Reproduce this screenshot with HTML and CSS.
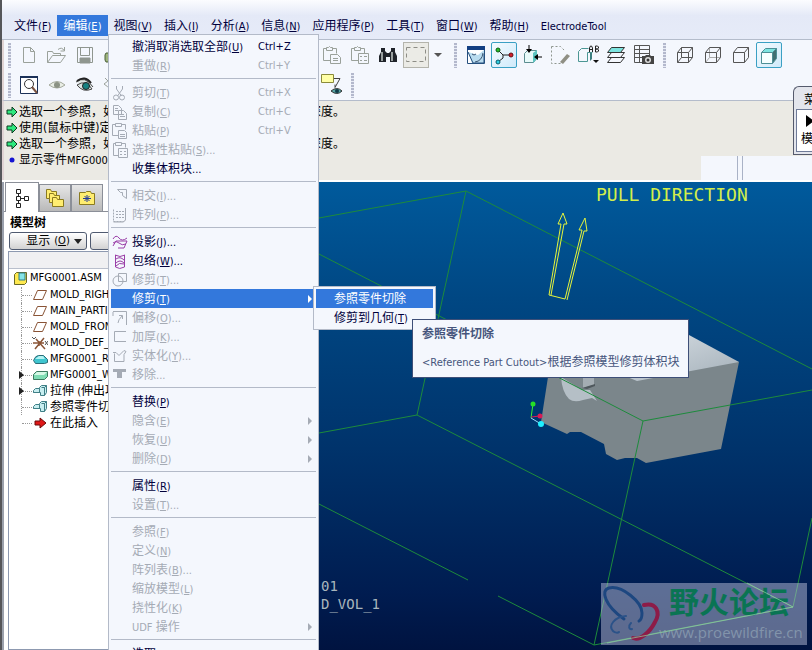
FILE: index.html
```
<!DOCTYPE html>
<html lang="zh-CN">
  <head>
    <meta charset="UTF-8" />
    <meta name="viewport" content="width=device-width, initial-scale=1.0" />
    <title>MFG0001.ASM</title>
    <link rel="stylesheet" href="styles.css">
  </head>
  <body>
    <div class="app">
      <nav class="menubar">
        <button>文件<span class="en">(<u>F</u>)</span></button>
        <button class="open">编辑<span class="en">(<u>E</u>)</span></button>
        <button>视图<span class="en">(<u>V</u>)</span></button>
        <button>插入<span class="en">(<u>I</u>)</span></button>
        <button>分析<span class="en">(<u>A</u>)</span></button>
        <button>信息<span class="en">(<u>N</u>)</span></button>
        <button>应用程序<span class="en">(<u>P</u>)</span></button>
        <button>工具<span class="en">(<u>T</u>)</span></button>
        <button>窗口<span class="en">(<u>W</u>)</span></button>
        <button>帮助<span class="en">(<u>H</u>)</span></button>
        <button><span class="en">ElectrodeTool</span></button>
      </nav>

      <div class="toolbars">
        <div class="toolbar">
          <div class="tool-group first">
            <span class="grip"></span>
            <button class="tool" aria-label="新建"><svg width="20" height="20" fill="none" stroke="#9aa19a"><path d="M4.500 2.500h7l4 4v11h-11zM11.500 2.500v4h4"/></svg></button>
            <button class="tool" aria-label="打开"><svg width="20" height="20" fill="none" stroke="#9aa19a"><path d="M.5 17.500v-11h5l1 2h7v2M.5 17.500l5-7h13l-5 7zM11 4.500q4-3 6 1M17.500 2v4h-4"/></svg></button>
            <button class="tool" aria-label="保存"><svg width="20" height="20" fill="none" stroke="#8f968f"><path d="M2.500 2.500h15v15h-15zM5.500 2.500v8h9v-8"/><path d="M5 13h10v5H5z" fill="#8f968f"/></svg></button>
            <button class="tool" aria-label="打印"><svg width="20" height="20"><path d="M3 8h12v9H3l-1-2v-5z" fill="#9db37c" stroke="#4a6038"/></svg></button>
          </div>
          <div class="tool-group">
            <button class="tool" aria-label="粘贴"><svg width="20" height="20" fill="none" stroke="#9aa19a"><path d="M8.500 15.500h-7v-12h3M10.500 3.500h4v5M4.500 2.500h2l1-1 1 1h2v3h-6zM8.500 9.500h7l3 3v6h-10zM11 13.500h5M11 15.500h5"/></svg></button>
            <button class="tool" aria-label="选择性粘贴"><svg width="20" height="20" fill="none" stroke="#9aa19a"><path d="M8.500 15.500h-7v-12h3M10.500 3.500h4v5M4.500 2.500h2l1-1 1 1h2v3h-6zM8.500 8.500h10v10h-10zM10 11.500h2M14 11.500h3M10 15.500h2M14 15.500h3"/></svg></button>
            <button class="tool" aria-label="查找"><svg width="20" height="20"><path d="M3 3h4v3l2 2h2l2-2V3h4v4l2 4v6h-7v-5H8v5H1v-6l2-4z" fill="#20242a"/><path d="M4 7v9M14 7v9" stroke="#9aa1a0" stroke-width="2"/></svg></button>
            <button class="tool pressed" aria-label="选取框"><svg width="20" height="20" fill="none" stroke="#8d8d86"><path d="M.5 2.500h19v14h-19z" stroke-dasharray="4 3"/></svg></button>
            <button class="drop" aria-label="选取选项"><svg width="8" height="4"><path d="M0 0h8L4 4z" fill="#555"/></svg></button>
            <span class="grip"></span>
            <button class="tool" aria-label="重画"><svg width="20" height="20"><path d="M1.500 1.500h17v17h-17z" fill="#fff" stroke="#26507e"/><path d="M1 1h18v4H1z" fill="#123f82"/><path d="M2 7l10 3 6-5v13H6z" fill="#b9dcef"/><path d="M2 7l5 11h11V9" fill="none" stroke="#26507e"/><path d="M6 9l2 1 2-1M9 17q7-1 8-9" stroke="#3b5573" fill="none"/></svg></button>
            <button class="tool on" aria-label="旋转中心"><svg width="20" height="20"><path d="M4 5l5 5h8M9 10v3l-5 4" stroke="#222" fill="none"/><circle cx="4" cy="5" r="2" fill="#27c227" stroke="#0a5a14"/><circle cx="17" cy="10" r="2" fill="#d21e2c" stroke="#640a10"/><circle cx="4" cy="17" r="2" fill="#2bd0e2" stroke="#0a5a6a"/></svg></button>
            <button class="tool" aria-label="定向模式"><svg width="20" height="20"><path d="M2.500 8.500l3-3h9v8l-3 4h-9z" fill="#e8fafa" stroke="#5b8d90"/><path d="M11 8l4-3v9l-4 4z" fill="#5cc4c0"/><path d="M7 0v6M20 12h-6" stroke="#000"/><path d="M4 4h6L7 8zM16 9v6l-4-3z" fill="#000"/></svg></button>
            <button class="tool" aria-label="外观"><svg width="20" height="20" fill="none"><path d="M1.500 1.500h9l4 4M1.500 1.500v17h9" stroke="#8f968f" stroke-dasharray="2 2"/><path d="M10 17l7-8 3 2-7 8z" fill="#8f8f84"/></svg></button>
            <button class="tool" aria-label="视图列表"><svg width="21" height="20"><path d="M.5 6.500l3-3h7M.5 6.500v10h9v-9h5" stroke="#4c9794" fill="none"/><path d="M12 8h2v6l-2 2z" fill="#3c7f80"/><path d="M15 15h6l-3 3z" fill="#111"/><path d="M11.500 7V3l1-2h1l1 2v4M11.500 4.500h3M17.500 1v6h2l1-1V5l-1-1h-2 2l1-1V2l-1-1z" stroke="#222" fill="none"/></svg></button>
            <button class="tool" aria-label="层"><svg width="20" height="20" stroke="#333"><path d="M1.500 17.500l4-5h13l-4 5z" fill="#f4f7fd"/><path d="M1.500 12.500l4-5h13l-4 5z" fill="#f4f7fd"/><path d="M1.500 7.500l4-5h13l-4 5z" fill="#7ce4e0"/></svg></button>
            <button class="tool" aria-label="视图管理器"><svg width="20" height="20"><path d="M.5.5h15v17H.5zM.5 4.500h15M.5 8.500h15M.5 12.500h8M5.500.5v17" fill="none" stroke="#555"/><path d="M8 11h3l1-1h4l1 1h3v8H8z" fill="#444"/><circle cx="14" cy="15" r="3" fill="#ddd"/><circle cx="14" cy="15" r="1.500" fill="#333"/></svg></button>
            <span class="grip"></span>
            <button class="tool" aria-label="线框"><svg width="20" height="20" fill="none" stroke="#555"><path d="M2.500 7.500h11v10h-11zM6.500 2.500h11v10h-11zM2.500 7.500l4-5M13.500 7.500l4-5M2.500 17.500l4-5M13.500 17.500l4-5"/></svg></button>
            <button class="tool" aria-label="隐藏线"><svg width="20" height="20" fill="none" stroke="#555"><path d="M6.500 2.500v10h11M2.500 17.500l4-5" stroke="#aaa"/><path d="M2.500 7.500h11v10h-11zM2.500 7.500l4-5h11v10l-4 5M13.500 7.500l4-5"/></svg></button>
            <button class="tool" aria-label="无隐藏线"><svg width="20" height="20" fill="none" stroke="#555"><path d="M2.500 7.500h11v10h-11zM2.500 7.500l4-5h11v10l-4 5M13.500 7.500l4-5"/></svg></button>
            <button class="tool on" aria-label="着色"><svg width="20" height="20" stroke="#4d8f96"><path d="M2.500 7.500l4-4h11l-4 4z" fill="#7ce4e0"/><path d="M13.500 7.500l4-4v10l-4 5z" fill="#3f7073"/><path d="M2.500 7.500h11v11h-11z" fill="#f6ffff"/></svg></button>
          </div>
        </div>
        <div class="toolbar">
          <div class="tool-group first">
            <span class="grip"></span>
            <button class="tool" aria-label="重新调整"><svg width="20" height="20" fill="none"><path d="M1.500 1.500h17v17h-17z" fill="#fff" stroke="#1b3158"/><path d="M1 2h18" stroke="#1b3158" stroke-width="2"/><circle cx="10" cy="9" r="4.500" stroke="#333"/><path d="M13 12l5 6" stroke="#7a5340" stroke-width="2"/></svg></button>
            <button class="tool" aria-label="显示"><svg width="20" height="20"><path d="M2 10q8-7 16 0-8 6-16 0z" fill="#e9eee6" stroke="#a4a99c"/><circle cx="10" cy="10" r="3" fill="#8b9284"/></svg></button>
            <button class="tool" aria-label="隐藏"><svg width="20" height="20"><path d="M1 7q9-7 17 5M2 10q9-6 15 4-9 4-15-4z" fill="#dfe6e4" stroke="#444"/><circle cx="11" cy="11" r="3.500" fill="#168080" stroke="#222"/><path d="M2 6q8-6 14 2" stroke="#222" stroke-width="2" fill="none"/></svg></button>
            <button class="tool" aria-label="取消隐藏"><svg width="20" height="20" fill="none" stroke="#9aa19a"><path d="M1 9q7-7 14 0-7 7-14 0zM2 3l14 14"/></svg></button>
          </div>
          <div class="tool-group">
            <button class="tool" aria-label="注释显示"><svg width="22" height="24"><path d="M.5 1.500h12v8H.5z" fill="#ffffa6" stroke="#8a8a3a"/><path d="M13 5.500h6l-5 9v-3" stroke="#444" fill="none"/><path d="M10 18q6-5 11 0-5 5-11 0z" fill="#56a3a3" stroke="#333"/><circle cx="16" cy="18" r="2" fill="#103c48"/></svg></button>
            <span class="grip"></span>
          </div>
        </div>
      </div>

      <div class="messages">
        <ul>
          <li><svg width="12" height="12"><path d="M1 4h5V1l5 5-5 5V8H1z" fill="#2ee87e" stroke="#0d3a20"/></svg><span class="msg">选取一个参照，如</span><span>深度。</span></li>
          <li><svg width="12" height="12"><path d="M1 4h5V1l5 5-5 5V8H1z" fill="#2ee87e" stroke="#0d3a20"/></svg><span class="msg">使用(鼠标中键)定</span></li>
          <li><svg width="12" height="12"><path d="M1 4h5V1l5 5-5 5V8H1z" fill="#2ee87e" stroke="#0d3a20"/></svg><span class="msg">选取一个参照，如</span><span>深度。</span></li>
          <li><svg width="12" height="12"><circle cx="6" cy="6" r="2.500" fill="#1414d2"/></svg><span class="msg">显示零件<span class="en">MFG0001</span></span></li>
        </ul>
        <div class="status"><span></span></div>
      </div>

      <div class="main">
        <aside class="navigator">
          <div class="tabs">
            <button class="tab active" aria-label="模型树"><svg width="16" height="20" fill="none" stroke="#222"><path d="M2.500 1.500h4v4h-4zM2.500 8.500h4v4h-4zM10.500 8.500h4v4h-4zM2.500 15.500h4v4h-4zM6.500 10.500h4M4.500 5.500v3M4.500 12.500v3"/></svg></button>
            <button class="tab" aria-label="文件夹浏览器"><svg width="20" height="20" fill="#ffed70" stroke="#8a7a20"><path d="M1.500 10.500v-9h4l1 2h5v7z"/><path d="M4.500 14.500v-9h4l1 2h5v7z"/><path d="M7.500 18.500v-9h4l1 2h6v7z"/></svg></button>
            <button class="tab" aria-label="收藏夹"><svg width="18" height="16"><path d="M1.500 14.500v-12h6l1-1h4l1 2h3v11z" fill="#ffed70" stroke="#8a7a20"/><path d="M9 5v7M5 8.500h8M6.500 6l5 5M11.500 6l-5 5" stroke="#223a9a"/></svg></button>
          </div>
          <h2>模型树</h2>
          <div class="tree-buttons">
            <button>显示<span class="en">(<u>O</u>)</span><svg width="8" height="5"><path d="M0 0h8L4 5z" fill="#222"/></svg></button>
            <button aria-label="设置"></button>
          </div>
          <div class="tree">
            <div class="tree-head"></div>
            <div class="root"><svg width="15" height="15"><path d="M1.500 3.500l2-2h10v10l-2 2h-10z" fill="#ffe94f" stroke="#6a6a28"/><path d="M6 2h6v7H6z" fill="#86e4e6" stroke="#2f7f88"/></svg><span class="en">MFG0001.ASM</span></div>
            <ul>
              <li><svg width="16" height="14"><path d="M5.500 2.500h9l-4 9h-9z" fill="none" stroke="#8a5436"/></svg><span class="en">MOLD_RIGHT</span></li>
              <li><svg width="16" height="14"><path d="M5.500 2.500h9l-4 9h-9z" fill="none" stroke="#8a5436"/></svg><span class="en">MAIN_PARTING</span></li>
              <li><svg width="16" height="14"><path d="M5.500 2.500h9l-4 9h-9z" fill="none" stroke="#8a5436"/></svg><span class="en">MOLD_FRONT</span></li>
              <li><svg width="16" height="14" fill="none"><path d="M1 7h11M3 13l9-11M4 3l9 10M7 5v5" stroke="#8a5436" stroke-width="1.500"/><path d="M13 5l3 4M16 5l-3 4M0 1l2 2 2-2" stroke="#555"/></svg><span class="en">MOLD_DEF_CSYS</span></li>
              <li><svg width="16" height="14"><path d="M1.500 8.500q2-5 5-5h5l4 4v3l-3 1h-9z" fill="#3fc5cf" stroke="#2c6d78"/><path d="M3 7l4-3h4l2 3z" fill="#b4f2f2"/></svg><span class="en">MFG0001_REF</span></li>
              <li class="branch"><svg width="16" height="14"><path d="M1.500 6.500l3-3h11v5l-3 3h-11z" fill="#7fdcb4" stroke="#3c7a60"/><path d="M2 7l3-3h10l-3 3z" fill="#d6f8e6"/></svg><span class="en">MFG0001_WRK</span></li>
              <li class="branch"><svg width="16" height="14" fill="#c8eef0" stroke="#3f7f86"><path d="M1.500 6.500l2-2h4v-1l2-2h5v7l-2 3h-4v-3h-7z"/><path d="M7.500 4.500v4h-6M9.500 3.500h3v8M12.500 3.500l2-2" fill="none"/></svg><span>拉伸<span class="en"> (</span>伸出项</span></li>
              <li><svg width="16" height="14" fill="#c8eef0" stroke="#3f7f86"><path d="M1.500 6.500l2-2h4v-1l2-2h5v7l-2 3h-4v-3h-7z"/><path d="M7.500 4.500v4h-6M9.500 3.500h3v8M12.500 3.500l2-2" fill="none"/></svg><span>参照零件切除</span></li>
              <li><svg width="16" height="14"><path d="M3 5h5V2l6 5-6 5V9H3z" fill="#e01818" stroke="#6a0a0a"/></svg><span>在此插入</span></li>
            </ul>
          </div>
        </aside>

        <div class="viewport">
          <svg class="scene" viewBox="319 182 493 468" preserveAspectRatio="xMinYMin meet">
            <defs>
              <linearGradient id="top" x1="0" y1="0" x2="1" y2="1">
                <stop offset="0" stop-color="#d9e0e6"/>
                <stop offset="1" stop-color="#a3afb8"/>
              </linearGradient>
            </defs>
            <!-- workpiece -->
            <path d="M548 377V350H689L739 362 721 449 646 463 637 458H625L617 460 606 454 604 444 581 432H570L567 434 541 422z" fill="#7b868b"/>
            <path d="M620 335H689L739 362 637 381 620 374z" fill="url(#top)"/>
            <path d="M561 377q1 15 8 22 5 4 14 1l9-2 5 3-7-11-8 0-8-5z" fill="#b5bfc6"/>
            <path d="M583 377h11v8l-11 3z" fill="#a4adb3"/>
            <path d="M582 388l13-4v2l-8 3z" fill="#4f585d"/>
            <g class="wire">
              <path d="M319 218L466 191 812 369M466 191L417 415 319 433M417 415L793 607 594 645M793 607L812 518"/>
              <path d="M319 254L643 421 812 390M643 421L594 645M319 504L468 580M498 596L594 645"/>
            </g>
            <!-- pull direction arrows -->
            <path class="pull" d="M563 213l-5 11h3l-12 71 16 4 17-69h-3l6-12 2 13h-3l-17 69M563 213l4 11h-3l-13 71"/>
            <text class="pull-label" x="596" y="201">PULL DIRECTION</text>
            <text class="part-label" x="321" y="591">01</text>
            <text class="part-label" x="321" y="609">D_VOL_1</text>
            <!-- csys -->
            <g fill="none">
              <path d="M533 404L531 418" stroke="#35f035"/>
              <path d="M531 417L540 416" stroke="#d81b55"/>
              <path d="M531 418L541 424" stroke="#9df"/>
            </g>
            <circle cx="533" cy="404" r="2.500" fill="#26e026"/>
            <circle cx="540" cy="416" r="2.500" fill="#d81b55"/>
            <circle cx="541" cy="424" r="3" fill="#1ef0ff"/>
            <!-- forum logo -->
            <path d="M601 583h206v62H601z" fill="#b9c0da" fill-opacity=".5"/>
            <g fill="none" stroke-linecap="round">
              <path d="M624 619C605 606 600 590 609 588 622 585 642 602 642 613 642 617 641 620 639 621" stroke="#1d4780" stroke-width="3"/>
              <path d="M626 616C614 617 608 626 613 631 615 633 618 633 619 632" stroke="#2b5288" stroke-width="2"/>
              <path d="M631 623C628 626 629 630 632 629" stroke="#2b5288" stroke-width="2"/>
              <path d="M644 605C656 602 661 612 655 622 650 632 640 641 633 638" stroke="#8d1c48" stroke-width="4"/>
            </g>
            <text class="logo-name" x="669" y="613">野火论坛</text>
            <text class="logo-url" x="659" y="638">www.proewildfire.cn</text>
            <path d="M747 583L793 607 607 643" fill="none" stroke="#8fd0a0" stroke-opacity=".7"/>
          </svg>
        </div>
      </div>

      <div class="manager">
        <div class="manager-title">菜单管理器</div>
        <div class="manager-body"><svg width="8" height="12"><path d="M0 0l8 6-8 6z"/></svg><div>模具</div></div>
      </div>

      <ul class="menu edit-menu">
        <li><button><i></i><span>撤消取消选取全部<span class="en">(<u>U</u>)</span></span><kbd>Ctrl+Z</kbd></button></li>
        <li><button disabled><i></i><span>重做<span class="en">(<u>R</u>)</span></span><kbd>Ctrl+Y</kbd></button></li>
        <li class="sep"></li>
        <li><button disabled><i><svg width="16" height="16"><path d="M4.500 1v3l5 7M10.500 1v3l-5 7"/><circle cx="4" cy="12.500" r="2.500"/><circle cx="10" cy="12.500" r="2.500"/></svg></i><span>剪切<span class="en">(<u>T</u>)</span></span><kbd>Ctrl+X</kbd></button></li>
        <li><button disabled><i><svg width="16" height="16"><path d="M1.500 1.500h5l3 3v6h-8zM6.500 6.500h5l3 3v6h-8zM3 4.500h3M3 6.500h3M8 10.500h4M8 12.500h5"/></svg></i><span>复制<span class="en">(<u>C</u>)</span></span><kbd>Ctrl+C</kbd></button></li>
        <li><button disabled><i><svg width="16" height="16"><path d="M6.500 12.500h-6v-11h3M9.500 1.500h4v5M3.500.5h6v3h-6zM6.500 7.500h6l2 2v6h-8zM8 11.500h5M8 13.500h5"/></svg></i><span>粘贴<span class="en">(<u>P</u>)</span></span><kbd>Ctrl+V</kbd></button></li>
        <li><button disabled><i><svg width="16" height="16"><path d="M6.500 13.500h-5v-12h2M9.500 1.500h4v4M3.500.5h6v3h-6zM6.500 6.500h9v9h-9zM8 9.500h2M12 9.500h2M8 12.500h2M12 12.500h2"/></svg></i><span>选择性粘贴<span class="en">(<u>S</u>)...</span></span></button></li>
        <li><button><i></i><span>收集体积块<span class="en">...</span></span></button></li>
        <li class="sep"></li>
        <li><button disabled><i><svg width="16" height="16"><path d="M5.500 1.500h9v9l-4-3v-3h-2z"/></svg></i><span>相交<span class="en">(<u>I</u>)...</span></span></button></li>
        <li><button disabled><i><svg width="16" height="16"><path d="M1.500 2.500v12h10l2-2v-11M4 4.500h8M4 7.500h8M4 10.500h8" stroke-dasharray="2 1"/><path d="M13.500 1v12l-2 2h-10"/></svg></i><span>阵列<span class="en">(<u>P</u>)...</span></span></button></li>
        <li class="sep"></li>
        <li><button><i><svg class="purple" width="16" height="16"><path d="M1 5q3-5 6-1t8 0M1 12l3-5h11l-3 7H6M1 9q3-3 6 0t7 1"/></svg></i><span>投影<span class="en">(<u>J</u>)...</span></span></button></li>
        <li><button><i><svg class="purple" width="16" height="16"><path d="M3.500 2v12q4 3 9 0V2M3 2q5 3 10 0M4 6q4-3 8 1M4 10q4-4 8 0M4 13q3-4 8-2"/></svg></i><span>包络<span class="en">(<u>W</u>)...</span></span></button></li>
        <li><button disabled><i><svg width="16" height="16"><circle cx="6" cy="9" r="5"/><path d="M6.500 1.500h8v8h-8z"/></svg></i><span>修剪<span class="en">(<u>T</u>)...</span></span></button></li>
        <li class="has-sub">
          <button class="hot"><i></i><span>修剪<span class="en">(<u>T</u>)</span></span><b></b></button>
          <ul class="menu submenu">
            <li><button class="hot"><i></i><span>参照零件切除</span></button></li>
            <li><button><i></i><span>修剪到几何<span class="en">(<u>T</u>)</span></span></button></li>
          </ul>
          <div class="tooltip" role="tooltip">
            <strong>参照零件切除</strong>
            <p><span class="en">&lt;Reference Part Cutout&gt;</span>根据参照模型修剪体积块</p>
          </div>
        </li>
        <li><button disabled><i><svg width="16" height="16"><path d="M1 1.500h13.500V15M1 2v4M6 13q0-3 4-7M7 5.500h3.500V9"/></svg></i><span>偏移<span class="en">(<u>O</u>)...</span></span></button></li>
        <li><button disabled><i><svg width="16" height="16"><path d="M14 2.500H2.500v10H14"/></svg></i><span>加厚<span class="en">(<u>K</u>)...</span></span></button></li>
        <li><button disabled><i><svg width="16" height="16"><path d="M1 4.500h3l3 3 5-5 2 1-2 3v7H2.500v-8"/></svg></i><span>实体化<span class="en">(<u>Y</u>)...</span></span></button></li>
        <li><button disabled><i><svg width="16" height="16"><path d="M1 2h13v3h-4v6H5V5H1z" fill="#a5abb5" stroke="none"/></svg></i><span>移除<span class="en">...</span></span></button></li>
        <li class="sep"></li>
        <li><button><i></i><span>替换<span class="en">(<u>P</u>)</span></span></button></li>
        <li><button disabled><i></i><span>隐含<span class="en">(<u>E</u>)</span></span><b></b></button></li>
        <li><button disabled><i></i><span>恢复<span class="en">(<u>U</u>)</span></span><b></b></button></li>
        <li><button disabled><i></i><span>删除<span class="en">(<u>D</u>)</span></span><b></b></button></li>
        <li class="sep"></li>
        <li><button><i></i><span>属性<span class="en">(<u>R</u>)</span></span></button></li>
        <li><button disabled><i></i><span>设置<span class="en">(<u>T</u>)...</span></span></button></li>
        <li class="sep"></li>
        <li><button disabled><i></i><span>参照<span class="en">(<u>F</u>)</span></span></button></li>
        <li><button disabled><i></i><span>定义<span class="en">(<u>N</u>)</span></span></button></li>
        <li><button disabled><i></i><span>阵列表<span class="en">(<u>B</u>)...</span></span></button></li>
        <li><button disabled><i></i><span>缩放模型<span class="en">(<u>L</u>)</span></span></button></li>
        <li><button disabled><i></i><span>挠性化<span class="en">(<u>K</u>)</span></span></button></li>
        <li><button disabled><i></i><span><span class="en">UDF </span>操作</span><b></b></button></li>
        <li class="sep"></li>
        <li><button><i></i><span>选取<span class="en">(<u>S</u>)</span></span><b></b></button></li>
      </ul>
    </div>
  </body>
</html>
```
FILE: styles.css
```
* {
  box-sizing: border-box;
}
body {
  margin: 0;
  height: 100vh;
  overflow: hidden;
  font-family: "DejaVu Sans Condensed", "Noto Sans CJK SC", sans-serif;
  font-size: 12px;
  line-height: 16px;
  color: #000;
}
ul {
  list-style: none;
  margin: 0;
  padding: 0;
}
button {
  font: inherit;
  color: inherit;
  background: none;
  border: 0;
  padding: 0;
  white-space: nowrap;
}
svg {
  display: block;
  flex: none;
}
.en,
kbd {
  font-family: "DejaVu Sans Condensed", "Noto Sans", sans-serif;
  font-size: 11px;
}
.app {
  position: relative;
  display: flex;
  flex-direction: column;
  height: 100%;
  overflow: hidden;
  border-left: 2px solid #55565a;
  background-color: #f4f7fd;
}

/* menu bar */
.menubar {
  display: flex;
  padding: 15px 0 3px 6px;
  background: linear-gradient(#fbfcff, #e4e9f7 40%, #e6ebf8);
  border-bottom: 1px solid #b4bccb;
  color: #00003c;
}
.menubar button {
  height: 21px;
  padding: 2px 6px 0;
}
.menubar .open {
  background-color: #3378dc;
  color: #fff;
}

/* toolbars */
.toolbars {
  border-left: 2px solid #e0d4d4;
  border-bottom: 1px solid #b4bccb;
}
.toolbar {
  display: flex;
  height: 30px;
}
.tool-group {
  display: flex;
  align-items: center;
}
.tool-group.first {
  width: 314px;
}
.grip {
  width: 3px;
  height: 25px;
  margin: 0 5px;
  background: repeating-linear-gradient(#b3b8cc 0 2px, #e8ecf6 2px 3px);
}
.first .grip {
  margin: 0 4px;
}
.tool {
  display: flex;
  align-items: center;
  justify-content: center;
  width: 26px;
  height: 26px;
  margin: 0 1px;
}
.tool.on {
  border: 1px solid #3aa0c4;
  border-radius: 2px;
  background: linear-gradient(135deg, #f4fbff, #cfeafa);
}
.tool.pressed {
  border: 1px solid #b4b4ac;
  background-color: #ebebe6;
}
.drop {
  width: 19px;
  padding-left: 4px;
}

/* message area */
.messages {
  display: flex;
  align-items: flex-end;
  justify-content: space-between;
  height: 79px;
  background-color: #ebeae4;
  border-left: 2px solid #e0d4d4;
}
.messages ul {
  align-self: flex-start;
  padding: 3px 0 0 2px;
}
.messages li {
  display: flex;
  align-items: center;
  height: 16px;
}
.msg {
  width: 290px;
  margin-left: 1px;
}
.status {
  width: 111px;
  height: 24px;
  padding-left: 36px;
  background-color: #f4f7fd;
}
.status span {
  display: block;
  width: 6px;
  height: 24px;
  border: solid #a9b2c6;
  border-width: 0 1px;
}

/* model tree */
.main {
  flex: 1;
  display: flex;
  min-height: 0;
  border-top: 2px solid #fff;
}
.navigator {
  display: flex;
  flex-direction: column;
  width: 317px;
  background-color: #fff;
  border-left: 2px solid #9aa0ac;
}
.tabs {
  display: flex;
  align-items: flex-end;
  height: 30px;
  padding-left: 1px;
  border-bottom: 1px solid #8b8f98;
}
.tab {
  display: flex;
  align-items: center;
  justify-content: center;
  width: 32px;
  height: 27px;
  border: 1px solid #8b8f98;
  border-bottom: 0;
  background: linear-gradient(#e6e6e6, #b9b9b9);
}
.tab.active {
  width: 34px;
  height: 30px;
  background: #fff;
  margin-bottom: -1px;
}
.navigator h2 {
  margin: 3px 0 0 6px;
  font-size: 12px;
  line-height: 16px;
}
.tree-buttons {
  display: flex;
  gap: 3px;
  margin: 1px 0 1px 5px;
}
.tree-buttons button {
  display: flex;
  align-items: center;
  justify-content: center;
  gap: 4px;
  width: 78px;
  height: 18px;
  padding-left: 12px;
  border: 1px solid #4f5a70;
  border-radius: 3px;
  background: linear-gradient(#fff, #d2d2d2);
}
.tree {
  flex: 1;
  margin-left: 4px;
  border: 1px solid #8d99b0;
}
.tree-head {
  height: 17px;
  background-color: #f0f0f2;
  border-bottom: 1px solid #b9bfcc;
}
.root {
  display: flex;
  align-items: center;
  gap: 2px;
  height: 18px;
  padding-left: 4px;
}
.tree ul {
  margin-left: 12px;
}
.tree li {
  position: relative;
  display: flex;
  align-items: center;
  gap: 2px;
  height: 16px;
  padding-left: 10px;
  border-left: 1px dotted #999;
  white-space: nowrap;
}
.tree li:last-child {
  border-left-color: transparent;
}
.tree li::before {
  content: "";
  position: absolute;
  left: 0;
  top: 8px;
  width: 10px;
  border-top: 1px dotted #999;
}
.tree .branch::after {
  content: "";
  position: absolute;
  left: -3px;
  top: 4px;
  border: 4px solid transparent;
  border-left: 5px solid #222;
  border-right: 0;
}

/* 3D view */
.viewport {
  flex: 1;
  background: linear-gradient(#005a9c, #004783 25%, #00336b 57%, #001c50 88%, #001340);
}
.scene {
  width: 100%;
}
.wire {
  fill: none;
  stroke: #1d8b3c;
}
.pull {
  fill: none;
  stroke: #e6f53c;
}
.pull-label,
.part-label {
  font-family: "DejaVu Sans Mono", monospace;
  font-size: 18px;
  fill: #d2ee4a;
}
.part-label {
  font-size: 14px;
  fill: #a9b6bd;
}
.logo-name {
  font-family: "Noto Sans CJK SC", sans-serif;
  font-size: 30px;
  font-weight: 700;
  fill: #0a7453;
}
.logo-url {
  font-family: "Open Sans", sans-serif;
  font-size: 15px;
  fill: #8294ab;
}

/* floating menu manager */
.manager {
  position: absolute;
  top: 86px;
  right: 0;
  width: 19px;
  height: 69px;
  overflow: hidden;
  border: 1px solid #555a6c;
  border-right: 0;
  border-radius: 6px 0 0 0;
  background-color: #e3e5ec;
  white-space: nowrap;
}
.manager-title {
  height: 22px;
  padding: 5px 0 0 10px;
}
.manager-body {
  width: 80px;
  height: 43px;
  margin-left: 2px;
  padding: 5px 0 0 4px;
  border: 1px solid #6f7b98;
  background-color: #fff;
}
.manager-body svg {
  margin: 0 0 4px 5px;
}

/* drop-down menus */
.menu {
  position: absolute;
  padding: 2px;
  border: 1px solid #b3bac8;
  background-color: #f4f7fd;
  color: #00003c;
}
.edit-menu {
  top: 34px;
  left: 106px;
  width: 211px;
}
.menu button {
  display: grid;
  grid-template-columns: 21px 126px 1fr;
  align-items: center;
  width: 100%;
  height: 19px;
  padding-top: 1px;
  text-align: left;
}
.menu button:disabled {
  color: #a5abb5;
}
.menu .hot {
  background-color: #3378dc;
  color: #fff;
}
.menu i svg {
  margin-left: 1px;
  fill: none;
  stroke: #a5abb5;
}
.menu i .purple {
  stroke: #9a3fa8;
}
.menu b {
  justify-self: end;
  margin-right: 4px;
  border: 4px solid transparent;
  border-left-color: currentColor;
  border-right: 0;
}
.sep {
  height: 8px;
  padding-top: 3px;
}
.sep::before {
  content: "";
  display: block;
  border-top: 1px solid #b3bac8;
}
.has-sub {
  position: relative;
}
.submenu {
  top: -3px;
  left: 202px;
  width: 123px;
}
.submenu button {
  grid-template-columns: 18px 1fr;
}
.tooltip {
  position: absolute;
  top: 30px;
  left: 301px;
  padding: 6px 9px;
  border: 1px solid #3e4f78;
  background-color: #f4f7fd;
  color: #46557c;
  white-space: nowrap;
}
.tooltip p {
  margin: 12px 0 0;
}
```
